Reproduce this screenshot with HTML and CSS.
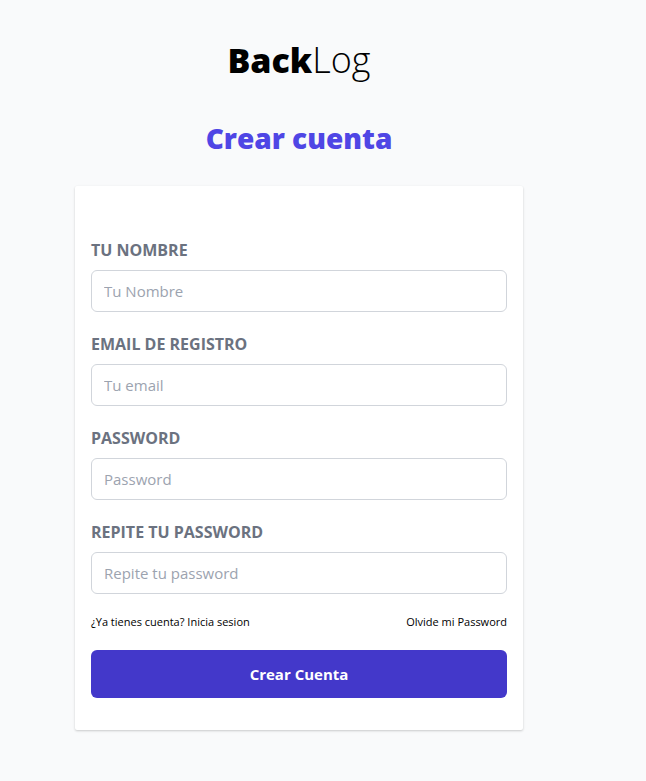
FILE: index.html
```html
<!DOCTYPE html>
<html lang="es">
<head>
<meta charset="utf-8">
<meta name="viewport" content="width=device-width, initial-scale=1">
<title>BackLog</title>
<link rel="stylesheet" href="styles.css">
</head>
<body>
<main class="page">
  <h1 class="brand"><strong>Back</strong>Log</h1>
  <h2 class="title">Crear cuenta</h2>
  <form class="card">
    <div class="field">
      <label for="name">Tu nombre</label>
      <input id="name" type="text" placeholder="Tu Nombre">
    </div>
    <div class="field">
      <label for="email">Email de registro</label>
      <input id="email" type="email" placeholder="Tu email">
    </div>
    <div class="field">
      <label for="password">Password</label>
      <input id="password" type="password" placeholder="Password">
    </div>
    <div class="field">
      <label for="repeat">Repite tu password</label>
      <input id="repeat" type="password" placeholder="Repite tu password">
    </div>
    <nav class="links">
      <a href="#login">¿Ya tienes cuenta? Inicia sesion</a>
      <a href="#forgot">Olvide mi Password</a>
    </nav>
    <button class="submit" type="submit">Crear Cuenta</button>
  </form>
</main>
</body>
</html>
```
FILE: styles.css
```css
* {
  box-sizing: border-box;
}

body {
  margin: 0;
  min-height: 100vh;
  background: #f9fafb;
  color: #000;
  font-family: "Segoe UI", "Open Sans", "Noto Sans", sans-serif;
  font-size: 15px;
  line-height: 24px;
}

.page {
  max-width: 448px;
  margin: 0 123px 0 75px;
  padding: 40px 0 48px;
}

.brand {
  margin: 0;
  font-size: 36px;
  line-height: 40px;
  font-weight: 300;
  text-align: center;
}

.brand strong {
  font-size: 34px;
  font-weight: 800;
}

.title {
  margin: 40px 0 30px;
  font-size: 28px;
  line-height: 36px;
  font-weight: 800;
  text-align: center;
  color: #4f46e5;
}

.card {
  padding: 52px 16px 32px;
  background: #fff;
  border-radius: 2px;
  box-shadow: 0 1px 3px rgba(0, 0, 0, 0.1), 0 1px 2px rgba(0, 0, 0, 0.1);
}

.field {
  margin-bottom: 20px;
}

.field label {
  display: block;
  margin-bottom: 8px;
  color: #6b7280;
  font-size: 16px;
  font-weight: 700;
  text-transform: uppercase;
}

.field input {
  display: block;
  width: 100%;
  padding: 8px 12px;
  border: 1px solid #d1d5db;
  border-radius: 6px;
  background: #fff;
  color: #000;
  font: inherit;
}

.field input::placeholder {
  color: #9ca3af;
  opacity: 1;
}

.links {
  display: flex;
  justify-content: space-between;
  margin-bottom: 20px;
  font-size: 11px;
  line-height: 16px;
}

.links a {
  color: inherit;
  text-decoration: none;
}

.submit {
  display: block;
  width: 100%;
  padding: 12px;
  border: 0;
  border-radius: 6px;
  background: #4338ca;
  color: #fff;
  font: inherit;
  font-weight: 700;
}
```
